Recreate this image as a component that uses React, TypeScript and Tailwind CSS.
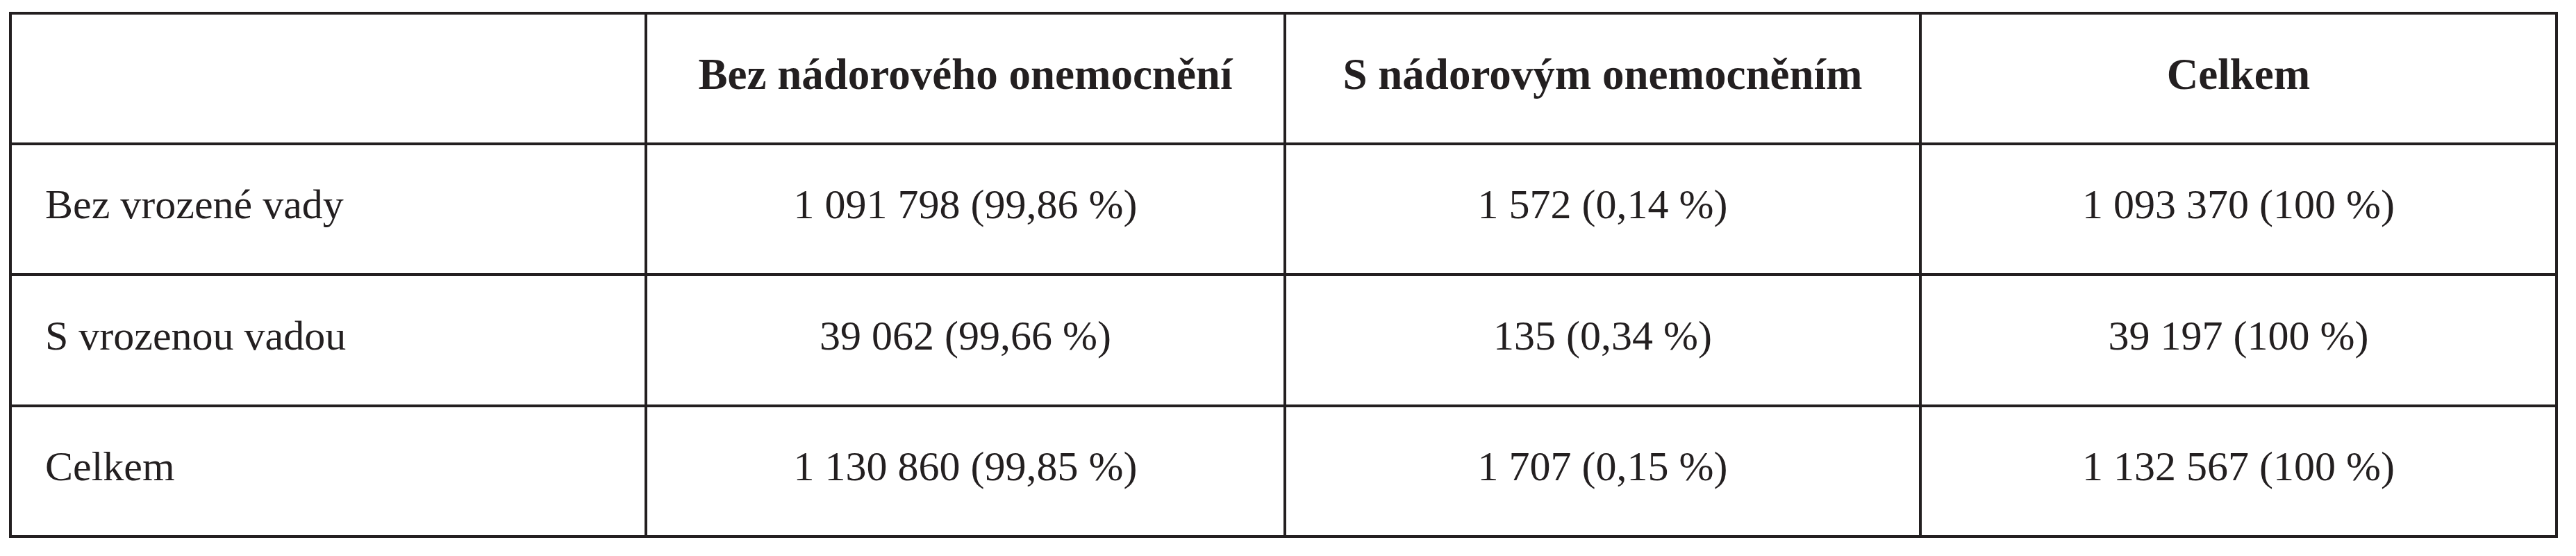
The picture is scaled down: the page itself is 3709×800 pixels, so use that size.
const headers = ['', 'Bez nádorového onemocnění', 'S nádorovým onemocněním', 'Celkem']

const rows = [
  { label: 'Bez vrozené vady', values: ['1 091 798 (99,86 %)', '1 572 (0,14 %)', '1 093 370 (100 %)'], h: 'h-[188px]' },
  { label: 'S vrozenou vadou', values: ['39 062 (99,66 %)', '135 (0,34 %)', '39 197 (100 %)'], h: 'h-[189px]' },
  { label: 'Celkem', values: ['1 130 860 (99,85 %)', '1 707 (0,15 %)', '1 132 567 (100 %)'], h: 'h-[188px]' },
]

export default function App() {
  return (
    <div className="min-h-screen bg-white pt-[17px] pl-[13px] text-[#231f20] font-['Liberation_Serif','Times_New_Roman',serif]">
      <div className="grid w-[3670px] grid-cols-[915px_920px_915px_916px] border-l-4 border-t-4 border-[#231f20]">
        {/* header row */}
        {headers.map((h, i) => (
          <div
            key={i}
            className="flex h-[188px] items-center justify-center border-b-4 border-r-4 border-[#231f20] pb-[12px] text-[63px] font-bold leading-normal whitespace-nowrap"
          >
            {h}
          </div>
        ))}

        {/* body rows */}
        {rows.map((r) => (
          <>
            <div
              key={r.label}
              className={`flex ${r.h} items-center border-b-4 border-r-4 border-[#231f20] pb-[14px] pl-[48px] text-[60px] leading-normal whitespace-nowrap`}
            >
              {r.label}
            </div>
            {r.values.map((v, j) => (
              <div
                key={r.label + j}
                className={`flex ${r.h} items-center justify-center border-b-4 border-r-4 border-[#231f20] pb-[14px] text-[60px] leading-normal whitespace-nowrap`}
              >
                {v}
              </div>
            ))}
          </>
        ))}
      </div>
    </div>
  )
}
